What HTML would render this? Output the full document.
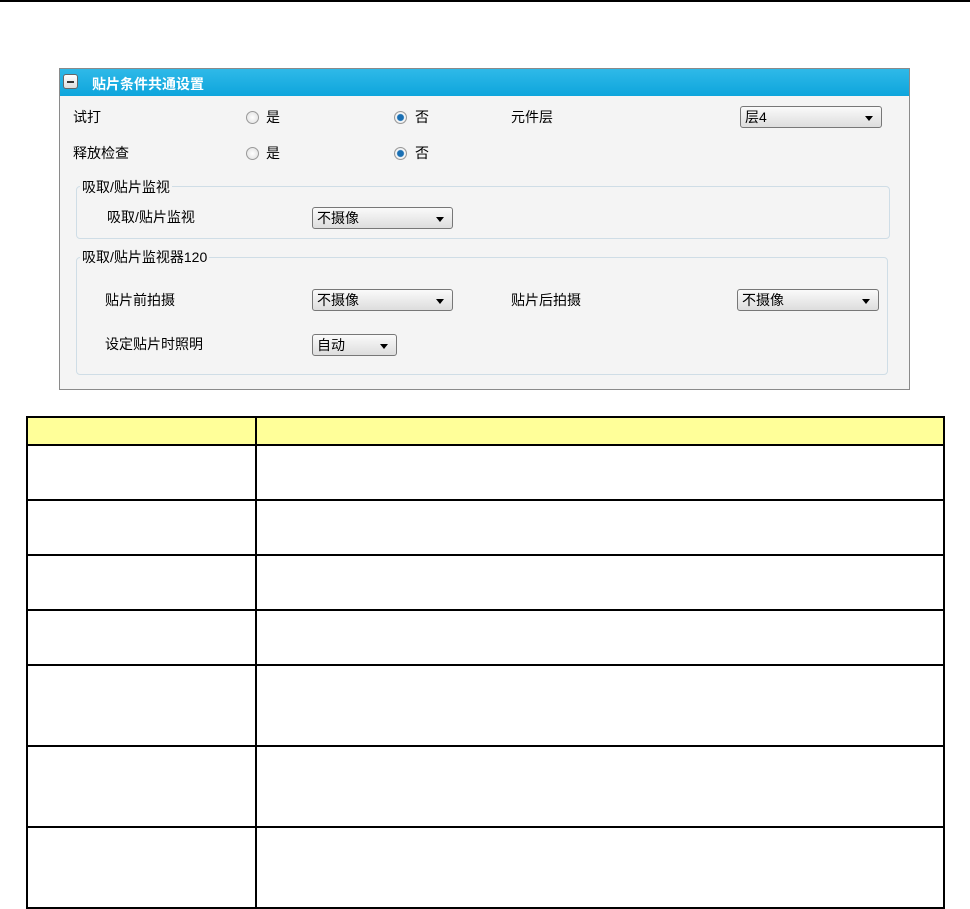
<!DOCTYPE html>
<html><head><meta charset="utf-8"><style>
body{margin:0;width:970px;height:909px;background:#fff;position:relative;overflow:hidden;font-family:"Liberation Sans","Noto Sans CJK SC",sans-serif;font-size:14px;color:#000}
.a{position:absolute}
.panel{left:59px;top:68px;width:851px;height:322px;background:#f4f4f4;border:1px solid #8a8a8a;box-sizing:border-box}
.hdr{left:0;top:0;width:849px;height:27px;background:linear-gradient(#2fb9e8,#0ea5dc);color:#fff;font-weight:bold;font-size:14px}
.minus{left:3px;top:5px;width:15px;height:15px;border:1px solid #666;border-radius:3px;background:linear-gradient(#fff,#ddd);box-sizing:border-box}
.minus:after{content:"";position:absolute;left:3px;top:6px;width:7px;height:2px;background:#333}
.grp{border:1px solid #cfdde6;border-radius:4px;box-sizing:border-box}
.lg{background:#f4f4f4;padding:0 2px}
.rad{width:13px;height:13px;border-radius:50%;border:1px solid #999;background:radial-gradient(#fff,#ddd);box-sizing:border-box}
.rad.on{background:radial-gradient(circle,#1a6fb3 0 3px,#fff 4px,#ddd 6px)}
.sel{height:22px;border:1px solid #777;border-radius:3px;background:linear-gradient(#fafafa,#ddd);box-sizing:border-box;padding-left:4px;line-height:20px;font-size:14px}
.sel:after{content:"";position:absolute;right:8px;top:9px;border-left:4px solid transparent;border-right:4px solid transparent;border-top:5px solid #000}
table{position:absolute;left:26px;top:416px;width:919px;border-collapse:collapse}
td{border:2px solid #000;padding:0}
</style></head><body>
<div class="a" style="left:0;top:0;width:970px;height:2px;background:#000"></div>
<div class="a panel">
 <div class="a hdr"><div class="a minus"></div><div class="a" style="left:32px;top:5px">贴片条件共通设置</div></div>
 <div class="a" style="left:13px;top:38px">试打</div>
 <div class="a rad" style="left:186px;top:42px"></div><div class="a" style="left:206px;top:38px">是</div>
 <div class="a rad on" style="left:334px;top:42px"></div><div class="a" style="left:355px;top:38px">否</div>
 <div class="a" style="left:451px;top:38px">元件层</div>
 <div class="a sel" style="left:680px;top:37px;width:142px">层4</div>
 <div class="a" style="left:13px;top:74px">释放检查</div>
 <div class="a rad" style="left:186px;top:78px"></div><div class="a" style="left:206px;top:74px">是</div>
 <div class="a rad on" style="left:334px;top:78px"></div><div class="a" style="left:355px;top:74px">否</div>
 <div class="a grp" style="left:16px;top:117px;width:814px;height:53px"></div>
 <div class="a lg" style="left:20px;top:108px">吸取/贴片监视</div>
 <div class="a" style="left:47px;top:138px">吸取/贴片监视</div>
 <div class="a sel" style="left:252px;top:138px;width:141px">不摄像</div>
 <div class="a grp" style="left:16px;top:188px;width:812px;height:118px"></div>
 <div class="a lg" style="left:20px;top:178px">吸取/贴片监视器120</div>
 <div class="a" style="left:45px;top:221px">贴片前拍摄</div>
 <div class="a sel" style="left:252px;top:220px;width:141px">不摄像</div>
 <div class="a" style="left:451px;top:221px">贴片后拍摄</div>
 <div class="a sel" style="left:677px;top:220px;width:142px">不摄像</div>
 <div class="a" style="left:45px;top:265px">设定贴片时照明</div>
 <div class="a sel" style="left:252px;top:265px;width:85px">自动</div>
</div>
<table>
<tr style="height:28px;background:#ffff99"><td style="width:227px"></td><td></td></tr>
<tr style="height:55px"><td></td><td></td></tr>
<tr style="height:55px"><td></td><td></td></tr>
<tr style="height:55px"><td></td><td></td></tr>
<tr style="height:55px"><td></td><td></td></tr>
<tr style="height:81px"><td></td><td></td></tr>
<tr style="height:81px"><td></td><td></td></tr>
<tr style="height:81px"><td></td><td></td></tr>
</table>
</body></html>
